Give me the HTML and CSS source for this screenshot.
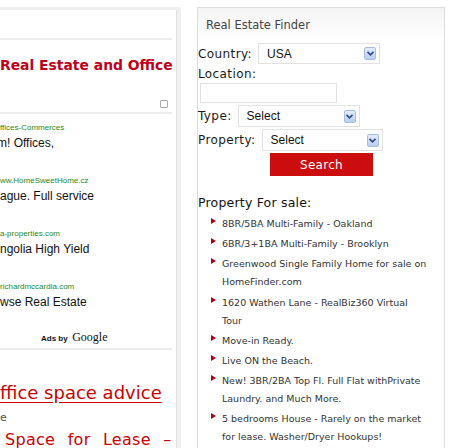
FILE: index.html
```html
<!DOCTYPE html>
<html>
<head>
<meta charset="utf-8">
<link rel="stylesheet" href="styles.css">
</head>
<body>
<div class="page">
  <div class="left">
    <div class="lbox">
      <div class="lhead"></div>
      <div class="hr"></div>
      <div class="ltitle">Real Estate and Office</div>
      <div class="chkrow"><span class="chk"></span></div>
      <div class="hr"></div>
      <div class="ads">
        <div class="ad">
          <div class="url">ffices-Commerces</div>
          <div class="adtext shift">m! Offices,</div>
        </div>
        <div class="ad">
          <div class="url">ww.HomeSweetHome.cz</div>
          <div class="adtext">ague. Full service</div>
        </div>
        <div class="ad">
          <div class="url">a-properties.com</div>
          <div class="adtext">ngolia High Yield</div>
        </div>
        <div class="ad">
          <div class="url">richardmccardia.com</div>
          <div class="adtext">wse Real Estate</div>
        </div>
        <div class="adsby"><span class="adsby-s">Ads by</span> <span class="google">Google</span></div>
      </div>
      <div class="hr"></div>
      <div class="articles">
        <a class="alink" href="#">ffice space advice</a>
        <div class="asub">e</div>
        <div class="alink2">Space for Lease –</div>
      </div>
    </div>
  </div>

  <div class="right">
    <div class="rhead">Real Estate Finder</div>
    <div class="frow">
      <span class="lbl">Country:</span>
      <div class="sel sel-country"><span>USA</span><span class="arr"><svg width="7" height="5" viewBox="0 0 7 5"><path d="M0.5 0.8 L3.5 3.8 L6.5 0.8" fill="none" stroke="#2b4a8a" stroke-width="1.6"/></svg></span></div>
    </div>
    <div class="lbl lrow">Location:</div>
    <div class="inp"></div>
    <div class="frow frow2">
      <span class="lbl">Type:</span>
      <div class="sel sel-type"><span>Select</span><span class="arr"><svg width="7" height="5" viewBox="0 0 7 5"><path d="M0.5 0.8 L3.5 3.8 L6.5 0.8" fill="none" stroke="#2b4a8a" stroke-width="1.6"/></svg></span></div>
    </div>
    <div class="frow frow2">
      <span class="lbl">Property:</span>
      <div class="sel sel-prop"><span>Select</span><span class="arr"><svg width="7" height="5" viewBox="0 0 7 5"><path d="M0.5 0.8 L3.5 3.8 L6.5 0.8" fill="none" stroke="#2b4a8a" stroke-width="1.6"/></svg></span></div>
    </div>
    <div class="btnrow"><div class="btn">Search</div></div>
    <div class="sale">Property For sale:</div>
    <ul class="list">
      <li>8BR/5BA Multi-Family - Oakland</li>
      <li>6BR/3+1BA Multi-Family - Brooklyn</li>
      <li>Greenwood Single Family Home for sale on HomeFinder.com</li>
      <li>1620 Wathen Lane - RealBiz360 Virtual Tour</li>
      <li>Move-in Ready.</li>
      <li>Live ON the Beach.</li>
      <li>New! 3BR/2BA Top Fl. Full Flat withPrivate Laundry. and Much More.</li>
      <li>5 bedrooms House - Rarely on the market for lease. Washer/Dryer Hookups!</li>
    </ul>
  </div>
</div>
</body>
</html>
```

FILE: styles.css
```css
html, body {
  margin: 0;
  padding: 0;
  background: #fff;
  overflow: hidden;
}
body {
  width: 450px;
  height: 448px;
  font-family: "DejaVu Sans", sans-serif;
}
.page {
  display: flex;
  align-items: flex-start;
  gap: 16px;
}

/* left column */
.left {
  width: 177px;
  margin-top: 7px;
  padding: 3px 4px 0 0;
  background: #f0f0f0;
  height: 500px;
  flex: none;
}
.lbox {
  width: 176px;
  height: 100%;
  background: #fff;
  border-right: 1px solid #e2e2e2;
  overflow: hidden;
}
.lhead { height: 28px; }
.hr {
  width: 172px;
  height: 2px;
  background: #ececec;
}
.ltitle {
  margin-top: 16px;
  height: 18px;
  line-height: 18px;
  font-weight: bold;
  font-size: 13.9px;
  color: #c0001b;
  white-space: nowrap;
}
.chkrow {
  height: 38px;
  display: flex;
  justify-content: flex-end;
  align-items: flex-end;
  padding-right: 8px;
  box-sizing: border-box;
  padding-bottom: 4px;
}
.chk {
  width: 6px;
  height: 6px;
  border: 1px solid #a8a8a8;
  border-radius: 1px;
}
.ads {
  padding-top: 8px;
  font-family: "Liberation Sans", Arial, sans-serif;
  white-space: nowrap;
}
.ad {
  height: 53px;
}
.url {
  font-size: 8px;
  line-height: 12px;
  color: #1f8a1f;
}
.adtext {
  font-size: 12px;
  line-height: 18px;
  color: #111;
}
.shift { margin-left: -3px; }
.adsby {
  margin-top: -10px;
  padding-left: 41px;
  height: 24px;
  line-height: 24px;
  color: #111;
}
.adsby-s {
  font-size: 8px;
  font-weight: bold;
}
.google {
  font-family: "Liberation Serif", serif;
  font-size: 12px;
}
.articles {
  padding-top: 32px;
  white-space: nowrap;
}
.alink {
  display: block;
  font-size: 18px;
  line-height: 22px;
  color: #c00;
  text-decoration: underline;
  text-underline-offset: 3px;
}
.asub {
  margin-top: 7px;
  font-size: 11px;
  line-height: 14px;
  color: #555;
}
.alink2 {
  margin-top: 4px;
  margin-left: 5px;
  font-size: 16px;
  line-height: 22px;
  color: #c00;
  word-spacing: 7px;
  letter-spacing: 0.3px;
}

/* right panel */
.right {
  width: 246px;
  margin-top: 7px;
  border: 1px solid #dcdcdc;
  height: 460px;
  background: linear-gradient(#f4f4f4, #fff 34px);
  flex: none;
  color: #222;
}
.rhead {
  padding: 9px 0 10px 8px;
  line-height: 16px;
  font-size: 11.5px;
  color: #444;
}
.lbl {
  font-size: 12px;
  letter-spacing: 0.4px;
  color: #1a1a1a;
  white-space: nowrap;
}
.frow {
  display: flex;
  align-items: center;
  gap: 6px;
  height: 21px;
}
.frow2 {
  height: 22px;
  margin-top: 2px;
}
.lrow {
  line-height: 18px;
  height: 18px;
  padding-top: 1px;
}
.sel {
  box-sizing: border-box;
  height: 100%;
  border: 1px solid #e2e2e2;
  display: flex;
  align-items: center;
  justify-content: space-between;
  padding: 0 3px 0 8px;
  font-family: "Liberation Sans", Arial, sans-serif;
  font-size: 12px;
  color: #111;
}
.sel-country { width: 122px; }
.sel-type { width: 122px; }
.sel-prop { width: 121px; }
.arr {
  width: 12px;
  height: 13px;
  box-sizing: border-box;
  border: 1px solid #a9bde3;
  border-radius: 2px;
  background: linear-gradient(#e4ecfb, #b9cdf0);
  display: flex;
  align-items: center;
  justify-content: center;
}
.inp {
  box-sizing: border-box;
  margin-left: 2px;
  width: 137px;
  height: 20px;
  border: 1px solid #e2e2e2;
}
.btnrow {
  margin-top: 2px;
  padding-left: 72px;
}
.btn {
  width: 103px;
  height: 23px;
  background: #cc0d0d;
  color: #fff;
  font-size: 12px;
  line-height: 24px;
  text-align: center;
  letter-spacing: 0.3px;
}
.sale {
  margin-top: 18px;
  font-size: 12.5px;
  line-height: 18px;
  color: #111;
  letter-spacing: 0.2px;
}
.list {
  list-style: none;
  margin: 3px 0 0;
  padding: 0 15px 0 24px;
  font-size: 9.5px;
  color: #333;
}
.list li {
  position: relative;
  line-height: 18px;
  padding-bottom: 2.2px;
}
.list li::before {
  content: "";
  position: absolute;
  left: -11px;
  top: 3px;
  width: 0;
  height: 0;
  border-top: 3px solid transparent;
  border-bottom: 3px solid transparent;
  border-left: 5px solid #b00016;
}
```
